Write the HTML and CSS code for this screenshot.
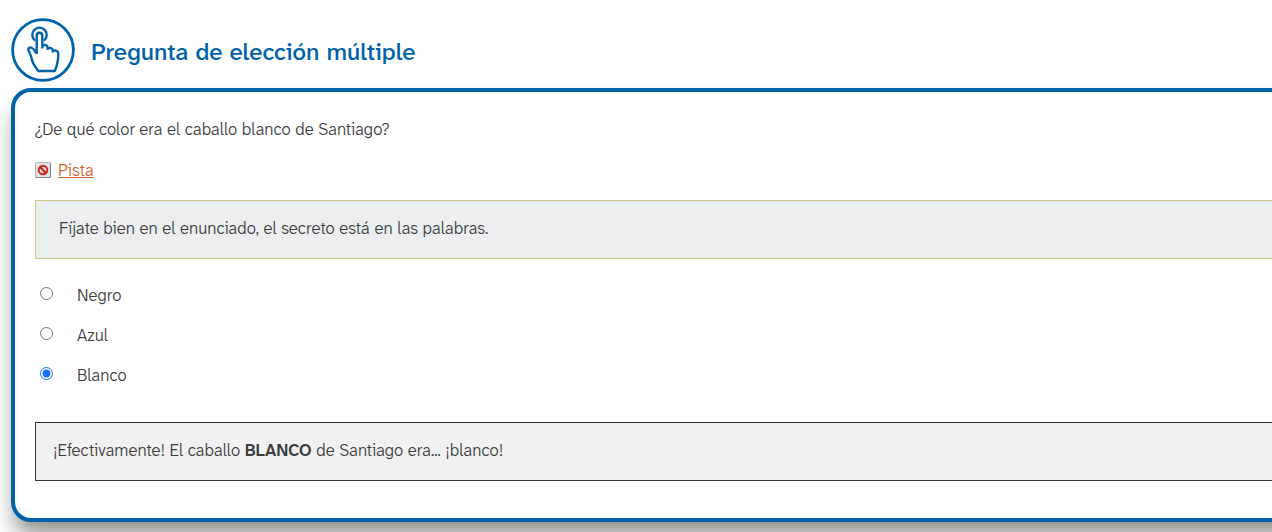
FILE: index.html
```
<!DOCTYPE html>
<html lang="es">

<head>
    <meta charset="UTF-8">
    <meta name="viewport" content="width=device-width, initial-scale=1.0">
    <title>Pregunta de elección múltiple</title>
    <link rel="stylesheet" href="styles.css">
</head>

<body>
    <section class="idevice">
        <header class="idevice-header">
            <svg class="idevice-icon" viewBox="0 0 64 64" aria-hidden="true">
                <circle cx="32" cy="32" r="30.4" stroke-width="2.8" />
                <path d="M24.2 22.600A7.200 7.200 0 1 1 32.800 22.600" />
                <path d="M25.700 36V17.500a2.800 2.800 0 0 1 5.600 0V30.500M31.300 28c2.400-1.800 5.300-.8 5.300 1.600v2.400M36.600 30.600c2.400-1.600 5.200-.4 5.200 2v2M41.800 33c2.800-1.200 5.600-.2 5.500 2.400c0 7-.8 11.500-3.500 17.600H27.300c-3.500-5-5.800-7.500-6.600-12c-.4-2.500-.8-4-2-6c-1.300-2.400-2.400-4-.7-5.100c2-1 4.300.4 5.300 2.300L25.700 35.500" />
            </svg>
            <h1>Pregunta de elección múltiple</h1>
        </header>

        <form class="idevice-body">
            <p class="question" id="question">¿De qué color era el caballo blanco de Santiago?</p>

            <p class="hint-toggle">
                <svg class="hint-icon" viewBox="0 0 16 16" aria-hidden="true">
                    <rect x=".5" y=".5" width="15" height="15" rx="1" fill="#e4e4e4" stroke="#b4b4b4" />
                    <path d="M.5 15.500H15.500V1" fill="none" stroke="#858585" />
                    <circle cx="8" cy="8" r="4.300" fill="#f3dcda" stroke="#d02a20" stroke-width="2" />
                    <path d="M5 5L11 11" stroke="#c3221a" stroke-width="2" />
                </svg>
                <a href="#hint">Pista</a>
            </p>

            <div class="hint" id="hint">
                <p>Fíjate bien en el enunciado, el secreto está en las palabras.</p>
            </div>

            <div class="answers" role="radiogroup" aria-labelledby="question">
                <div class="answer">
                    <input type="radio" name="answer" id="answer-1">
                    <label for="answer-1">Negro</label>
                </div>
                <div class="answer">
                    <input type="radio" name="answer" id="answer-2">
                    <label for="answer-2">Azul</label>
                </div>
                <div class="answer">
                    <input type="radio" name="answer" id="answer-3" checked>
                    <label for="answer-3">Blanco</label>
                </div>
            </div>

            <div class="feedback">
                <p>¡Efectivamente! El caballo <strong>BLANCO</strong> de Santiago era... ¡blanco!</p>
            </div>
        </form>
    </section>
</body>

</html>
```

FILE: styles.css
```
* {
    margin: 0;
    padding: 0;
    box-sizing: border-box;
}

body {
    min-height: 100vh;
    padding: 18px 0 0 11px;
    background-color: #fff;
    color: #3c3c3c;
    font-family: "Atkinson Hyperlegible Next", "Atkinson Hyperlegible", "Liberation Sans", Arial, sans-serif;
    font-size: 17px;
    font-weight: 350;
    line-height: 24px;
    overflow-x: hidden;
}

/* The box runs past the right side of the window */
.idevice {
    margin-right: -60px;
}

.idevice-header {
    display: flex;
    align-items: center;
    gap: 16px;
    margin-bottom: 6px;
}

.idevice-icon {
    width: 64px;
    height: 64px;
    fill: none;
    stroke: #0062a8;
    stroke-width: 2.4;
    stroke-linejoin: round;
}

h1 {
    padding-top: 4px;
    color: #0062a8;
    font-size: 24px;
    line-height: 32px;
    font-weight: 500;
}

.idevice-body {
    padding: 25px 20px 37px;
    background-color: #fff;
    border: 4px solid #0062a8;
    border-radius: 20px;
    box-shadow: 0 16px 22px -4px rgba(0, 0, 0, 0.45);
}

.question {
    margin-bottom: 17px;
}

.hint-toggle {
    display: flex;
    align-items: center;
    gap: 7px;
    margin-bottom: 18px;
}

.hint-icon {
    width: 16px;
    height: 16px;
}

.hint-toggle a {
    color: #d3622a;
}

.hint {
    padding: 15px 23px 18px;
    background-color: #eaf0f0;
    border: 1px solid #cdc682;
}

.answers {
    display: grid;
    gap: 16px;
    margin: 24px 0 35px;
}

.answer {
    display: flex;
    align-items: center;
    gap: 24px;
    padding-left: 5px;
}

.answer input {
    width: 13px;
    height: 13px;
    margin-bottom: 3px;
    accent-color: #1a6dff;
}

.feedback {
    padding: 15px 17px 18px;
    background-color: #f1f1f1;
    border: 1px solid #333;
}

.feedback strong {
    font-weight: 600;
}
```
